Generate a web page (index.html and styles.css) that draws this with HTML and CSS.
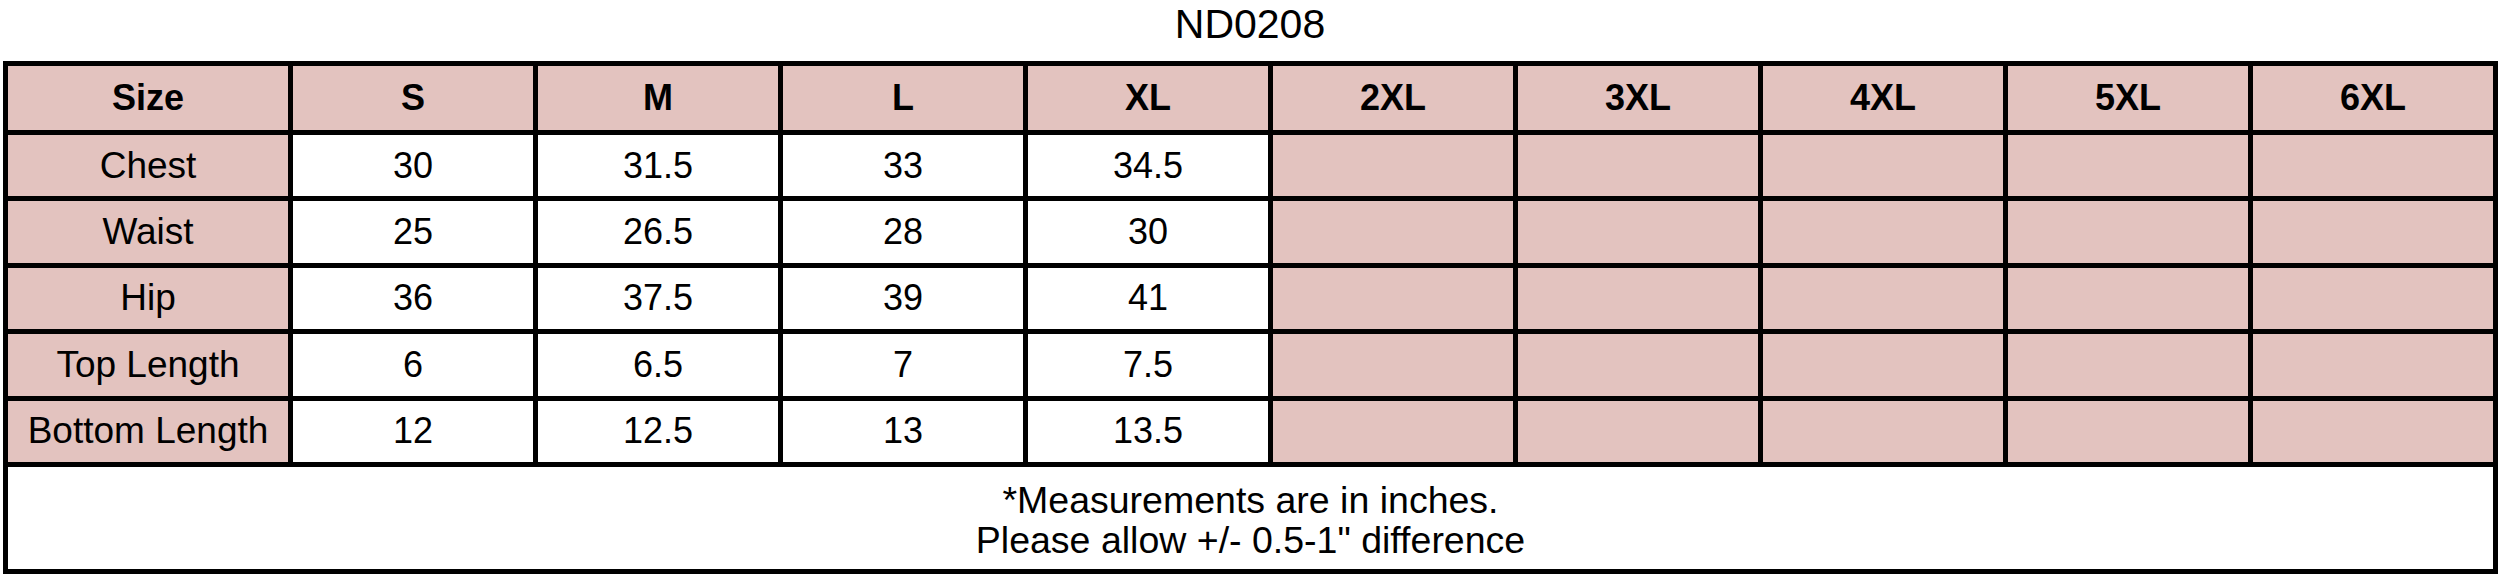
FILE: index.html
```html
<!DOCTYPE html>
<html>
<head>
	<title>ND0208 Size Chart</title>
	<link rel="stylesheet" href="styles.css">
</head>
<body>
	<h1 class="title">ND0208</h1>
	<div class="chart">
		<div class="cell pink head">Size</div>
		<div class="cell pink head">S</div>
		<div class="cell pink head">M</div>
		<div class="cell pink head">L</div>
		<div class="cell pink head">XL</div>
		<div class="cell pink head">2XL</div>
		<div class="cell pink head">3XL</div>
		<div class="cell pink head">4XL</div>
		<div class="cell pink head">5XL</div>
		<div class="cell pink head">6XL</div>

		<div class="cell pink label">Chest</div>
		<div class="cell">30</div>
		<div class="cell">31.5</div>
		<div class="cell">33</div>
		<div class="cell">34.5</div>
		<div class="cell pink"></div>
		<div class="cell pink"></div>
		<div class="cell pink"></div>
		<div class="cell pink"></div>
		<div class="cell pink"></div>

		<div class="cell pink label">Waist</div>
		<div class="cell">25</div>
		<div class="cell">26.5</div>
		<div class="cell">28</div>
		<div class="cell">30</div>
		<div class="cell pink"></div>
		<div class="cell pink"></div>
		<div class="cell pink"></div>
		<div class="cell pink"></div>
		<div class="cell pink"></div>

		<div class="cell pink label">Hip</div>
		<div class="cell">36</div>
		<div class="cell">37.5</div>
		<div class="cell">39</div>
		<div class="cell">41</div>
		<div class="cell pink"></div>
		<div class="cell pink"></div>
		<div class="cell pink"></div>
		<div class="cell pink"></div>
		<div class="cell pink"></div>

		<div class="cell pink label">Top Length</div>
		<div class="cell">6</div>
		<div class="cell">6.5</div>
		<div class="cell">7</div>
		<div class="cell">7.5</div>
		<div class="cell pink"></div>
		<div class="cell pink"></div>
		<div class="cell pink"></div>
		<div class="cell pink"></div>
		<div class="cell pink"></div>

		<div class="cell pink label">Bottom Length</div>
		<div class="cell">12</div>
		<div class="cell">12.5</div>
		<div class="cell">13</div>
		<div class="cell">13.5</div>
		<div class="cell pink"></div>
		<div class="cell pink"></div>
		<div class="cell pink"></div>
		<div class="cell pink"></div>
		<div class="cell pink"></div>

		<div class="cell note">
			<span>*Measurements are in inches.</span>
			<span>Please allow +/- 0.5-1" difference</span>
		</div>
	</div>
</body>
</html>
```

FILE: styles.css
```css
body {
	font-family: "Liberation Sans", Arial, Helvetica, sans-serif;
	color: #000;
	background: #fff;
	margin: 0;
	padding: 0;
}

.title {
	margin: 0;
	padding-top: 1px;
	font-size: 41px;
	font-weight: normal;
	line-height: 46px;
	text-align: center;
}

.chart {
	display: grid;
	grid-template-columns: 280px repeat(9, 240px);
	grid-template-rows: 64px repeat(5, 61.4px) 102px;
	gap: 5px;
	padding: 5px;
	margin: 14px 0 0 3px;
	width: max-content;
	background: #000;
}

.cell {
	display: flex;
	align-items: center;
	justify-content: center;
	background: #fff;
	font-size: 36px;
	white-space: nowrap;
}

.pink {
	background: #e3c3bf;
}

.head {
	font-weight: bold;
}

.label {
	font-size: 37px;
}

.note {
	grid-column: 1 / -1;
	flex-direction: column;
	font-size: 37.5px;
	line-height: 40px;
	padding-top: 4px;
}
```
